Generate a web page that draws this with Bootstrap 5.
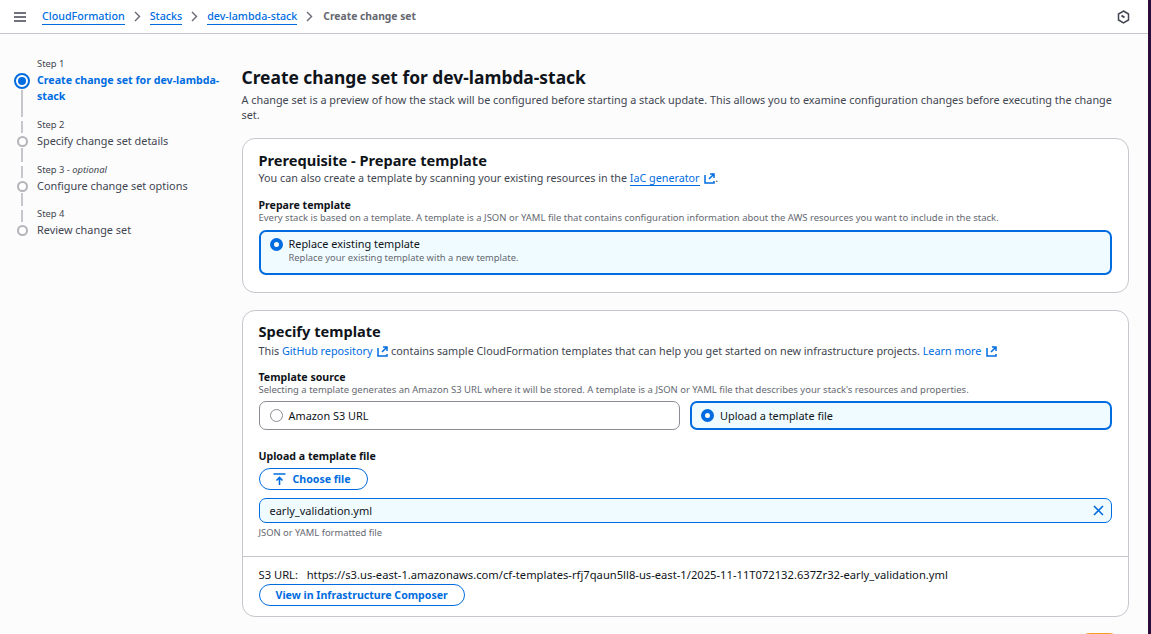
<!DOCTYPE html>
<html lang="en">
<head>
<meta charset="utf-8">
<title>Create change set</title>
<link rel="stylesheet" href="https://cdn.jsdelivr.net/npm/bootstrap@5.3.0/dist/css/bootstrap.min.css">
<style>
html,body{height:634px;overflow:hidden}
body{background:#fcfcfd;font-family:"Noto Sans","Open Sans",sans-serif;font-size:11px;line-height:15px;color:#0f141a}
.page-frame{height:634px;overflow:hidden;border-right:3px solid #2b0b3a}
a{color:#006ce0}
.topbar{height:34px;background:#fff;border-bottom:1px solid #c6c6cd;padding:0 18px 0 14px}
.crumb{font-size:10.7px;line-height:15px;font-weight:500;color:#006ce0;text-decoration:none;border-bottom:1px solid #006ce0}
.crumb-sep{margin:0 9px;color:#656871}
.crumb-now{font-size:10.3px;font-weight:700;color:#656871;margin-left:1px}
.burger{margin-right:16px}
.layout{display:flex}
.stepper{width:241.5px;flex:none;padding:21px 14px 0 11px;list-style:none;margin:0}
.stp{display:grid;grid-template-columns:22px 1fr}
.stp-line{width:2px;background:#c6c6cd;justify-self:center}
.stp-label{font-size:9.4px;line-height:16px;color:#424650;height:16px}
.stp-first .stp-label{height:17px;line-height:17px}
.stp-mark{display:flex;flex-direction:column;align-items:center;padding-top:3px}
.stp-mark .stp-line{flex:1;margin-top:1px}
.stp-dot{width:11px;height:11px;border:2px solid #b4b4bb;border-radius:50%;background:#fff;flex:none}
.stp-dot-on{width:16px;height:16px;border:2px solid #006ce0;border-radius:50%;background:#fff;flex:none;display:flex;align-items:center;justify-content:center;margin-top:-2px}
.stp-dot-on::after{content:"";width:8px;height:8px;border-radius:50%;background:#006ce0}
.stp-title{line-height:16px;color:#424650;padding-bottom:13px;font-size:10.9px}
.stp-title-on{color:#006ce0;font-weight:700;font-size:10.65px}
.stp-tight .stp-title{padding-bottom:12px}
.stp-last .stp-title{padding-bottom:0}
.stp-col{margin-left:4px}
.main-area{width:887px;flex:none;padding-top:33px}
.page-title{font-size:17.4px;line-height:21px;font-weight:700;margin:0 0 4px;color:#0f141a}
.page-desc{font-size:10.85px;line-height:15px;color:#424650;margin:0 0 16px}
.panel{border:1px solid #c6c6cd;border-radius:13px;background:#fff;margin-bottom:17px}
.panel-last{margin-bottom:16px}
.panel-pad{padding:11px 16px 17px}
.panel-title{font-size:14.6px;line-height:21px;font-weight:700;margin:0}
.panel-sub{font-size:10.75px;line-height:15px;color:#424650;margin:0 0 12px}
.second-head{padding-top:10px}
.second-head .panel-title{margin-bottom:1px}
.second-head .panel-sub{font-size:10.8px;margin-bottom:12px}
.field-label{font-size:10.6px;line-height:14px;font-weight:700;color:#0f141a}
.field-desc{font-size:9.47px;line-height:12px;color:#656871}
.tile{border:1px solid #8c8c94;border-radius:7px;background:#fff;display:flex;padding:6px 10px;gap:6px;flex:1 1 0}
.tile-on{border:2px solid #006ce0;background:#f0fbff;padding:5px 9px}
.tile-tall{height:45px;margin-top:6px}
.tile-short{height:29px;align-items:center}
.tile-row{gap:10px;margin-top:5px;margin-bottom:19px}
.tile-name{font-size:10.9px;line-height:14px;color:#0f141a}
.tile-note{font-size:9.4px;line-height:13px;color:#656871}
.rdo{width:13px;height:13px;border-radius:50%;flex:none;background:#fff;border:1px solid #8c8c94;margin-top:1px}
.rdo-on{border:4px solid #006ce0}
.tile-short .rdo{margin-top:0}
.pill{border:1px solid #006ce0;border-radius:11px;background:#fff;color:#006ce0;font-size:10.6px;line-height:14px;font-weight:700;height:22px;padding:3px 16px;display:inline-flex;align-items:center;gap:7px}
.pill:hover{background:#fff;color:#006ce0;border-color:#006ce0}
.pill-icon{padding-left:13px}
.upload-label{margin-bottom:5px}
.file-box{height:25px;border:1px solid #006ce0;border-radius:7px;background:#f0fbff;font-size:11px;color:#0f141a;padding:0 7px 0 10px;margin-top:8px;margin-bottom:4px}
.hint{font-size:9.4px;line-height:12px;color:#656871}
.divide{border-top:1px solid #c6c6cd;padding:10px 16px 10px}
.url-line{font-size:11.2px;line-height:15px;color:#0f141a;white-space:nowrap;margin-bottom:2px}
.next-btn{width:43px;height:32px;background:#f89c24;border:0;border-radius:12px;font-size:11px;font-weight:700;color:#0f141a;padding:0}
.next-btn:hover{background:#f89c24}
.ext{vertical-align:-2px;margin-left:2px}
.lnk-u{text-decoration:none;border-bottom:1px solid #006ce0}
.lnk{text-decoration:none}
</style>
</head>
<body>
<div class="page-frame">
<header class="topbar d-flex align-items-center">
  <svg class="burger" width="12" height="10" viewBox="0 0 12 10" fill="none" stroke="#424650" stroke-width="1.5"><path d="M0 1h12M0 5h12M0 9h12"/></svg>
  <nav class="d-flex align-items-center" aria-label="breadcrumb">
    <a class="crumb" href="#">CloudFormation</a>
    <svg class="crumb-sep" width="7" height="11" viewBox="0 0 7 11" fill="none" stroke="#656871" stroke-width="1.4"><path d="M1 1l4.5 4.5L1 10"/></svg>
    <a class="crumb" href="#">Stacks</a>
    <svg class="crumb-sep" width="7" height="11" viewBox="0 0 7 11" fill="none" stroke="#656871" stroke-width="1.4"><path d="M1 1l4.5 4.5L1 10"/></svg>
    <a class="crumb" href="#">dev-lambda-stack</a>
    <svg class="crumb-sep" width="7" height="11" viewBox="0 0 7 11" fill="none" stroke="#656871" stroke-width="1.4"><path d="M1 1l4.5 4.5L1 10"/></svg>
    <span class="crumb-now">Create change set</span>
  </nav>
  <svg class="ms-auto" width="13" height="14" viewBox="0 0 13 14" fill="none" stroke="#424650" stroke-width="1.5"><path d="M6.5 1l5 3v6l-5 3-5-3V4z"/><path d="M4.5 5.5l3 2" stroke-width="2"/></svg>
</header>
<div class="layout">
  <ol class="stepper">
    <li class="stp stp-first">
      <div class="stp-mark"></div>
      <div class="stp-label stp-col">Step 1</div>
      <div class="stp-mark"><span class="stp-dot-on"></span><span class="stp-line"></span></div>
      <div class="stp-title stp-title-on stp-col">Create change set for dev-lambda-stack</div>
    </li>
    <li class="stp">
      <div class="stp-mark"><span class="stp-line"></span></div>
      <div class="stp-label stp-col">Step 2</div>
      <div class="stp-mark"><span class="stp-dot"></span><span class="stp-line"></span></div>
      <div class="stp-title stp-col">Specify change set details</div>
    </li>
    <li class="stp stp-tight">
      <div class="stp-mark"><span class="stp-line"></span></div>
      <div class="stp-label stp-col">Step 3 - <em>optional</em></div>
      <div class="stp-mark"><span class="stp-dot"></span><span class="stp-line"></span></div>
      <div class="stp-title stp-col">Configure change set options</div>
    </li>
    <li class="stp stp-last">
      <div class="stp-mark"><span class="stp-line"></span></div>
      <div class="stp-label stp-col">Step 4</div>
      <div class="stp-mark"><span class="stp-dot"></span></div>
      <div class="stp-title stp-col">Review change set</div>
    </li>
  </ol>
  <main class="main-area">
    <h1 class="page-title">Create change set for dev-lambda-stack</h1>
    <p class="page-desc">A change set is a preview of how the stack will be configured before starting a stack update. This allows you to examine configuration changes before executing the change set.</p>
    <section class="panel panel-pad">
      <h2 class="panel-title">Prerequisite - Prepare template</h2>
      <p class="panel-sub">You can also create a template by scanning your existing resources in the <a class="lnk-u" href="#">IaC generator</a> <svg class="ext" width="11" height="11" viewBox="0 0 11 11" fill="none" stroke="#006ce0" stroke-width="1.5"><path d="M1 2v8h9V8M5 6l5-5M6 1h4v4"/></svg>.</p>
      <div class="field-label">Prepare template</div>
      <div class="field-desc">Every stack is based on a template. A template is a JSON or YAML file that contains configuration information about the AWS resources you want to include in the stack.</div>
      <div class="tile tile-on tile-tall">
        <span class="rdo rdo-on"></span>
        <div><div class="tile-name">Replace existing template</div><div class="tile-note">Replace your existing template with a new template.</div></div>
      </div>
    </section>
    <section class="panel panel-last">
      <div class="panel-pad second-head">
        <h2 class="panel-title">Specify template</h2>
        <p class="panel-sub">This <a class="lnk" href="#">GitHub repository</a> <svg class="ext" width="11" height="11" viewBox="0 0 11 11" fill="none" stroke="#006ce0" stroke-width="1.5"><path d="M1 2v8h9V8M5 6l5-5M6 1h4v4"/></svg> contains sample CloudFormation templates that can help you get started on new infrastructure projects. <a class="lnk" href="#">Learn more</a> <svg class="ext" width="11" height="11" viewBox="0 0 11 11" fill="none" stroke="#006ce0" stroke-width="1.5"><path d="M1 2v8h9V8M5 6l5-5M6 1h4v4"/></svg></p>
        <div class="field-label">Template source</div>
        <div class="field-desc">Selecting a template generates an Amazon S3 URL where it will be stored. A template is a JSON or YAML file that describes your stack's resources and properties.</div>
        <div class="d-flex tile-row">
          <div class="tile tile-short"><span class="rdo"></span><span class="tile-name">Amazon S3 URL</span></div>
          <div class="tile tile-short tile-on"><span class="rdo rdo-on"></span><span class="tile-name">Upload a template file</span></div>
        </div>
        <div class="field-label upload-label">Upload a template file</div>
        <button type="button" class="btn pill pill-icon"><svg width="13" height="12" viewBox="0 0 13 12" fill="none" stroke="#006ce0" stroke-width="1.6"><path d="M0.5 1h12M6.5 12V4.5M3.5 7.5l3-3 3 3"/></svg>Choose file</button>
        <div class="file-box d-flex align-items-center justify-content-between"><span>early_validation.yml</span><svg width="11" height="11" viewBox="0 0 11 11" fill="none" stroke="#006ce0" stroke-width="1.6"><path d="M1 1l9 9M10 1l-9 9"/></svg></div>
        <div class="hint">JSON or YAML formatted file</div>
      </div>
      <div class="divide">
        <div class="url-line">S3 URL: &nbsp; https://s3.us-east-1.amazonaws.com/cf-templates-rfj7qaun5ll8-us-east-1/2025-11-11T072132.637Zr32-early_validation.yml</div>
        <button type="button" class="btn pill">View in Infrastructure Composer</button>
      </div>
    </section>
    <div class="d-flex justify-content-end pe-2"><button type="button" class="btn next-btn">Next</button></div>
  </main>
</div>
</div>
</body>
</html>
